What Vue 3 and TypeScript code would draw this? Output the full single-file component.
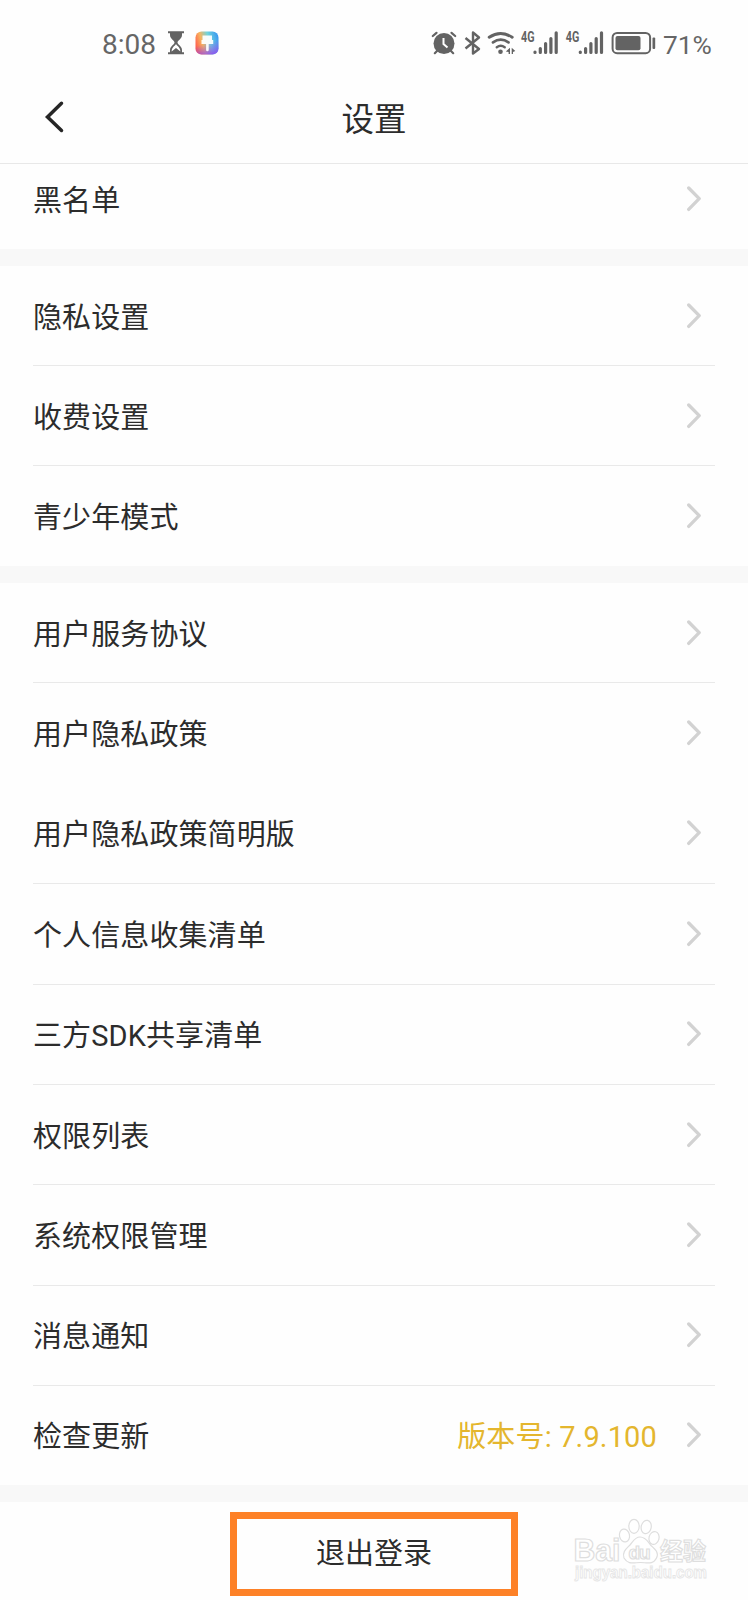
<script setup lang="ts">
interface Row {
  label: string
  value?: string
  noLine?: boolean
}

const groups: { name: string; rows: Row[] }[] = [
  { name: 'first', rows: [{ label: '黑名单' }] },
  { name: 'second', rows: [{ label: '隐私设置' }, { label: '收费设置' }, { label: '青少年模式' }] },
  {
    name: 'third',
    rows: [
      { label: '用户服务协议' },
      { label: '用户隐私政策', noLine: true },
      { label: '用户隐私政策简明版' },
      { label: '个人信息收集清单' },
      { label: '三方SDK共享清单' },
      { label: '权限列表' },
      { label: '系统权限管理' },
      { label: '消息通知' },
      { label: '检查更新', value: '版本号: 7.9.100' },
    ],
  },
]
</script>

<template>
  <div class="screen">
    <div class="status">
      <span class="clock">8:08</span>
      <svg class="hourglass" width="18" height="24" viewBox="0 0 18 24">
        <path d="M1 1.2H17M1 22.2H17" stroke="#636363" stroke-width="2" />
        <path d="M3 1.5H15V4C15 8 10.5 9.500 10.500 11.500S15 15 15 19V22H3V19C3 15 7.500 13.500 7.500 11.500S3 8 3 4Z" fill="#636363" />
        <path d="M9 13C8 15 4.800 16 4.600 20.500L9 17L13.400 20.500C13.200 16 10 15 9 13Z" fill="#fff" />
      </svg>
      <svg class="theme" width="24" height="24" viewBox="0 0 24 24">
        <defs>
          <linearGradient id="hue" x1="0" y1="0.6" x2="1" y2="0.3">
            <stop offset="0" stop-color="#ff5f4e" />
            <stop offset="0.3" stop-color="#f7b45e" />
            <stop offset="0.62" stop-color="#6ed4dc" />
            <stop offset="1" stop-color="#3b9af0" />
          </linearGradient>
          <linearGradient id="low" x1="0.3" y1="0" x2="0.6" y2="1">
            <stop offset="0.5" stop-color="#8d4df0" stop-opacity="0" />
            <stop offset="1" stop-color="#8d4df0" stop-opacity="0.85" />
          </linearGradient>
        </defs>
        <rect x="0.500" y="0.500" width="23" height="23" rx="6" fill="url(#hue)" />
        <rect x="0.500" y="0.500" width="23" height="23" rx="6" fill="url(#low)" />
        <path d="M7.500 4.500H17V9H18.200V13H13.700V19A1.300 1.300 0 0 1 11.100 19V13H6.500V9H7.500Z" fill="#fff" opacity="0.93" />
      </svg>
      <div class="spacer"></div>
      <svg class="system" width="230" height="28" viewBox="0 0 230 28">
        <g fill="none" stroke="#636363" stroke-linecap="round">
          <path d="M1.800 6L5.500 2.800M20.500 2.800L24.200 6" stroke-width="2.200" />
          <path d="M6 21L3.800 23.200M20 21L22.200 23.200" stroke-width="2.200" />
          <path d="M34.500 8L48 19L42 23.500V2.500L48 7.500L34.500 18.500" stroke-width="2.400" stroke-linejoin="round" stroke-linecap="butt" />
          <path d="M58.200 7.300Q69.500 -0.500 81.200 7.300" stroke-width="2.900" />
          <path d="M62 12.400Q69.700 7 77.500 12.400" stroke-width="2.700" />
          <path d="M65.800 17.200Q69.700 14.500 73.700 17.200" stroke-width="2.500" />
        </g>
        <circle cx="13" cy="13.500" r="10.500" fill="#636363" />
        <path d="M12.500 8V14L16.500 17.500" stroke="#fff" stroke-width="2" fill="none" />
        <circle cx="69.500" cy="21.800" r="2.300" fill="#636363" />
        <path d="M79 17.800V24H77.600V22L74.800 21.500ZM80.700 17.800V24H82V22L84.300 21Z" fill="#636363" />
        <g fill="#636363" font-family="Roboto, sans-serif" font-weight="700" font-size="14">
          <text x="90" y="12" textLength="13.500" lengthAdjust="spacingAndGlyphs">4G</text>
          <text x="134.800" y="12" textLength="13.500" lengthAdjust="spacingAndGlyphs">4G</text>
        </g>
        <g stroke="#636363" stroke-width="3.200" stroke-linecap="round">
          <path d="M104 22V22.400M109.300 18.500V22.400M114.600 13.500V22.400M119.900 8.500V22.400M125.200 2.800V22.400" />
          <path d="M149.300 22V22.400M154.600 18.500V22.400M159.900 13.500V22.400M165.200 8.500V22.400M170.500 2.800V22.400" />
        </g>
        <rect x="181.600" y="3" width="37.500" height="20.200" rx="4.500" fill="none" stroke="#636363" stroke-width="2" />
        <rect x="184.500" y="6" width="25" height="14.300" rx="2" fill="#636363" />
        <rect x="221.500" y="7.500" width="2.700" height="11.500" rx="1" fill="#636363" />
      </svg>
      <span class="percent">71%</span>
    </div>

    <header class="bar">
      <svg class="back" width="22" height="34" viewBox="0 0 22 34">
        <path d="M18.500 3.300L4.500 17L18.500 30.500" fill="none" stroke="#262626" stroke-width="3.500" stroke-linecap="round" />
      </svg>
      <h1>设置</h1>
    </header>

    <section v-for="g in groups" :key="g.name" class="group" :class="g.name">
      <div v-for="r in g.rows" :key="r.label" class="row" :class="{ plain: r.noLine }">
        <span class="label">{{ r.label }}</span>
        <span v-if="r.value" class="value">{{ r.value }}</span>
        <svg class="chevron" width="16" height="26" viewBox="0 0 16 26">
          <path d="M2.700 2L13.200 12.700L2.700 23.400" fill="none" stroke="#d2d2d2" stroke-width="3.300" stroke-linecap="round" stroke-linejoin="round" />
        </svg>
      </div>
    </section>

    <footer class="footer">
      <button class="logout">退出登录</button>
      <svg class="mark" width="140" height="72" viewBox="0 0 140 72">
        <g fill="#fff" stroke="#dedede" stroke-width="1.200">
          <text x="2.500" y="43" font-family="Liberation Sans, Arial, sans-serif" font-weight="700" font-size="31" textLength="47" lengthAdjust="spacingAndGlyphs">Bai</text>
          <ellipse cx="53.500" cy="17.500" rx="5" ry="6.500" transform="rotate(-12 53.500 17.500)" />
          <ellipse cx="63" cy="8.300" rx="5.200" ry="7" />
          <ellipse cx="75.200" cy="9" rx="5" ry="6.700" transform="rotate(12 75.200 9)" />
          <ellipse cx="83" cy="20" rx="5" ry="6.500" transform="rotate(15 83 20)" />
          <path d="M69 19C75 19 77 24 80 27.500C85 32 88 35 85.500 40C82 47 76 44.500 69.500 44.500S57 47 53 40C51 34 55 31 59 27C62 23.500 64 19 69 19Z" />
          <text x="57.500" y="41" font-family="Liberation Sans, Arial, sans-serif" font-weight="700" font-size="19" textLength="22">du</text>
          <text x="89" y="42" font-family="Noto Sans CJK SC, sans-serif" font-weight="700" font-size="24" textLength="46" lengthAdjust="spacingAndGlyphs">经验</text>
        </g>
        <text x="4" y="60" fill="#fff" stroke="#e6e6e6" stroke-width="0.900" font-family="Liberation Sans, Arial, sans-serif" font-weight="700" font-size="16" textLength="132" lengthAdjust="spacingAndGlyphs">jingyan.baidu.com</text>
      </svg>
    </footer>
  </div>
</template>

<style>
body {
  background: #fefefe;
}
</style>

<style scoped>
.screen {
  width: 748px;
  height: 1600px;
  overflow: hidden;
  display: flex;
  flex-direction: column;
  background: #fefefe;
  color: #2c2c2c;
  font-family: Roboto, "Noto Sans CJK SC", sans-serif;
}
.status {
  flex: none;
  height: 84px;
  box-sizing: border-box;
  padding: 0 37px 0 102px;
  display: flex;
  align-items: center;
  color: #666;
}
.clock {
  width: 65px;
  font-size: 28px;
  line-height: 34px;
  padding-top: 6px;
}
.hourglass {
  margin-top: 2px;
}
.theme {
  margin: 2px 0 0 10px;
}
.spacer {
  flex: 1;
}
.system {
  flex: none;
  margin-top: 3px;
}
.percent {
  flex: none;
  width: 48px;
  margin-left: 2px;
  padding-top: 6px;
  font-size: 26.3px;
  line-height: 34px;
  white-space: nowrap;
}
.bar {
  flex: none;
  height: 80px;
  box-sizing: border-box;
  padding: 0 43px;
  display: grid;
  grid-template-columns: 22px 1fr 22px;
  align-items: start;
  border-bottom: 1px solid #e8e8e8;
}
.back {
  margin-top: 16px;
}
h1 {
  margin: 16px 0 0;
  text-align: center;
  font-size: 32.5px;
  line-height: 40px;
  font-weight: 400;
}
.group {
  flex: none;
  box-sizing: content-box;
  display: flex;
  flex-direction: column;
  border-bottom: 17px solid #f8f8f8;
}
.first {
  height: 85px;
  justify-content: flex-end;
  overflow: hidden;
}
.first .row {
  flex: none;
  height: 100px;
}
.second {
  height: 300px;
}
.third {
  height: 902px;
}
.row {
  flex: 1;
  box-sizing: border-box;
  margin: 0 33px;
  padding: 0 13px 0 0;
  display: flex;
  align-items: center;
  border-bottom: 1px solid #e9e9e9;
}
.row:last-child,
.row.plain {
  border-bottom-color: transparent;
}
.third .row:last-child {
  flex: none;
  height: 99px;
}
.label {
  flex: 1;
  padding-top: 4px;
  font-size: 29px;
  line-height: 40px;
  letter-spacing: 0.1px;
}
.value {
  padding-top: 4px;
  margin-right: 29px;
  font-size: 29px;
  line-height: 40px;
  letter-spacing: 0.15px;
  color: #e4b62e;
}
.chevron {
  flex: none;
}
.footer {
  flex: 1;
  display: grid;
  grid-template-columns: 230px 288px 230px;
  align-items: start;
}
.logout {
  grid-column: 2;
  height: 84px;
  margin-top: 10px;
  padding: 0 0 6px;
  border: 7px solid #fd8127;
  background: #fefefe;
  color: inherit;
  font: inherit;
  font-size: 29px;
}
.mark {
  margin: 16px 0 0 53px;
  overflow: visible;
}
</style>
